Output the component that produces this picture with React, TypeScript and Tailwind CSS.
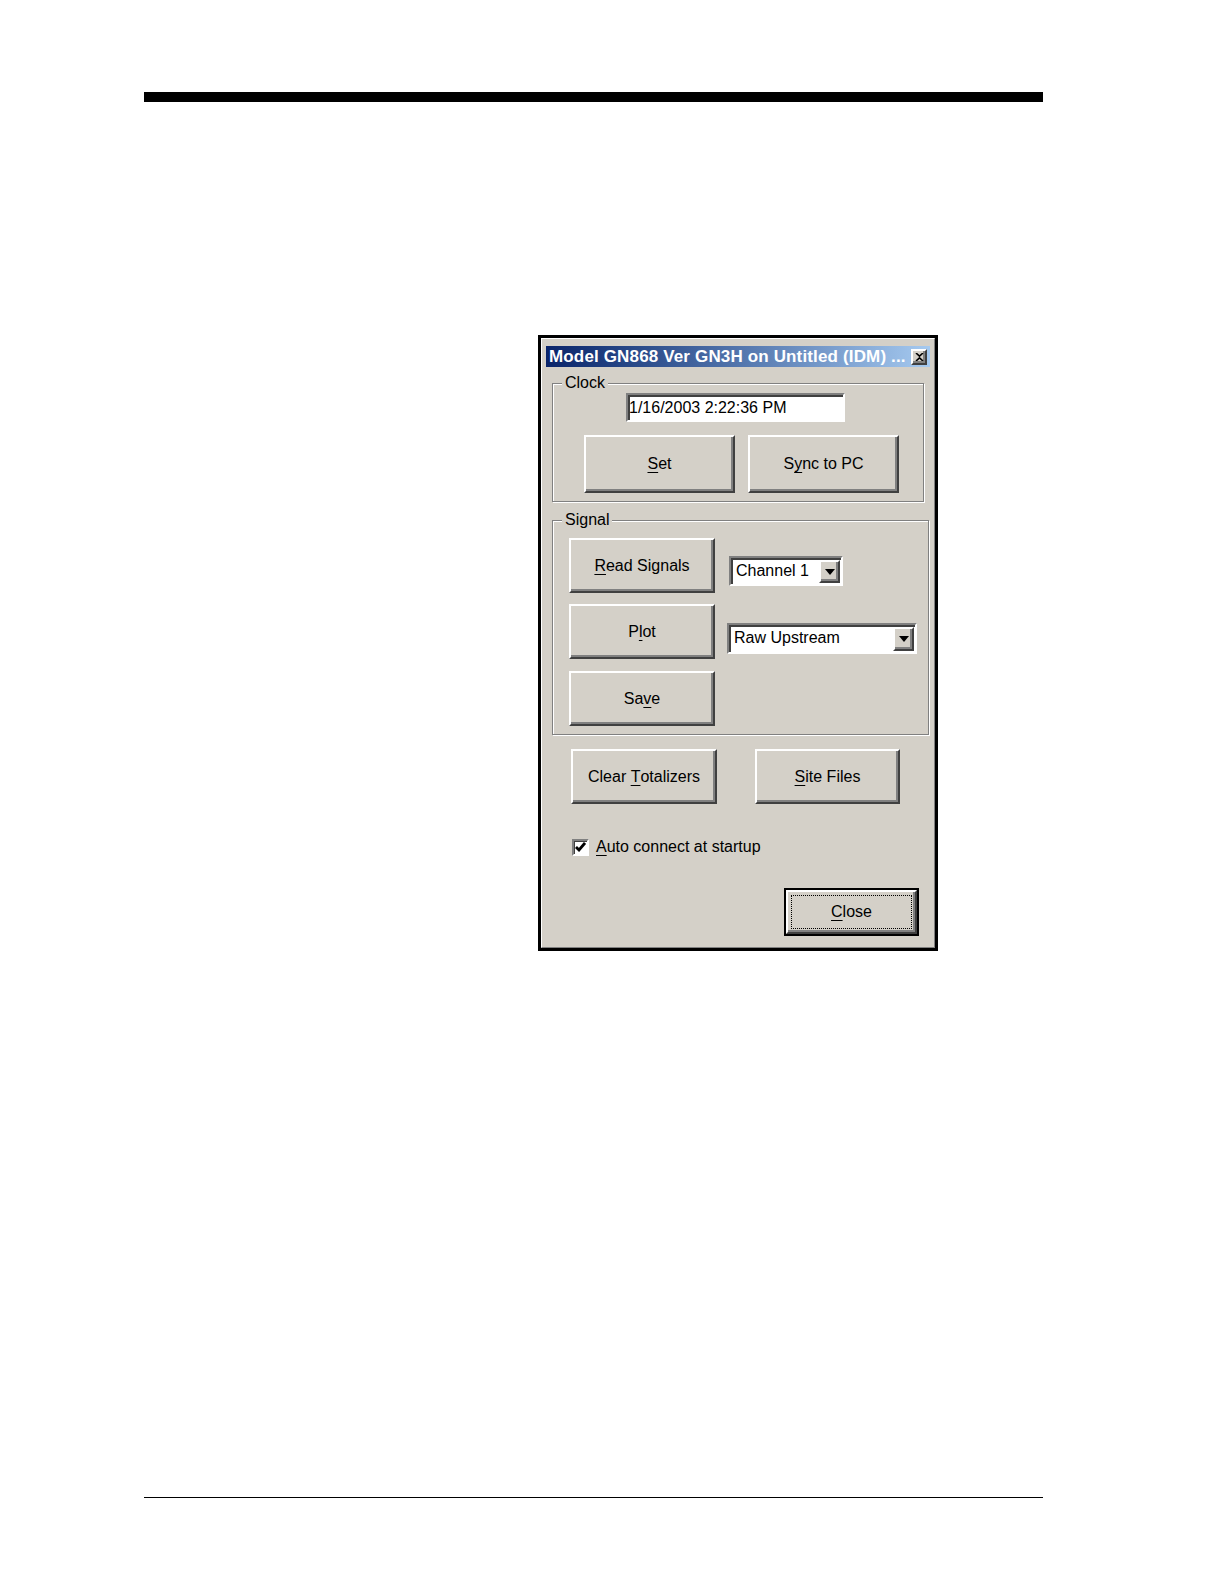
import React from "react";

const face = "bg-[#d4d0c8]";

function Raised({ className = "", children }: { className?: string; children?: React.ReactNode }) {
  return (
    <div
      className={`flex items-center justify-center ${face} border-2 border-t-white border-l-white border-r-[#404040] border-b-[#404040] shadow-[inset_-2px_-2px_0_#808080] ${className}`}
    >
      {children}
    </div>
  );
}

function U({ children }: { children: React.ReactNode }) {
  return <span className="underline underline-offset-[3px] decoration-1">{children}</span>;
}

function Group({ label, className = "", children }: { label: string; className?: string; children: React.ReactNode }) {
  return (
    <div className={`relative border border-[#808080] shadow-[inset_1px_1px_0_#fff,1px_1px_0_#fff] ${className}`}>
      <span className={`absolute -top-[10px] left-[9px] px-[3px] leading-[18px] ${face}`}>{label}</span>
      {children}
    </div>
  );
}

function DownArrow() {
  return (
    <svg width="10" height="6" viewBox="0 0 10 6">
      <path d="M0 0h10L5 6z" fill="#000" />
    </svg>
  );
}

function Select({ value, className = "" }: { value: string; className?: string }) {
  return (
    <div
      className={`flex items-stretch bg-white border-2 border-t-[#808080] border-l-[#808080] border-r-white border-b-white shadow-[inset_2px_2px_0_#404040] ${className}`}
    >
      <span className="flex-1 pl-[5px] pt-[3px] leading-[20px]">{value}</span>
      <Raised className="w-[21px] mt-[2px] mb-[1px] mr-[1px]">
        <DownArrow />
      </Raised>
    </div>
  );
}

export default function App() {
  return (
    <div className="h-[1584px] overflow-hidden bg-white pt-[92px] font-['Liberation_Sans',Arial,sans-serif] text-[16px] text-black">
      <div className="ml-[144px] w-[899px]">
        <div className="h-[10px] bg-black" />

        {/* Dialog window */}
        <div className="ml-[394px] mt-[233px] w-[400px] border-[3px] border-black">
          <div className={`${face} border border-t-white border-l-white border-r-[#808080] border-b-[#808080] px-[4px] pt-[7px] pb-[11px]`}>
            {/* Title bar */}
            <div className="flex h-[21px] items-center justify-between bg-linear-to-r from-[#0a246a] to-[#a6caf0] pl-[3px] pr-[3px]">
              <span className="whitespace-nowrap text-[17px] font-bold leading-[21px] tracking-[0.15px] text-white">
                Model GN868 Ver GN3H on Untitled (IDM) ...
              </span>
              <Raised className="h-[16px] w-[16px] shrink-0 border">
                <svg width="9" height="8" viewBox="0 0 9 8">
                  <path d="M1 0l3.5 3.2L8 0M1 8l3.5-3.2L8 8" stroke="#000" strokeWidth="1.6" fill="none" />
                </svg>
              </Raised>
            </div>

            {/* Clock */}
            <Group label="Clock" className="ml-[6px] mt-[16px] w-[372px] pb-[8px]">
              <div className="ml-[73px] mt-[9px] flex h-[29px] w-[219px] items-center bg-white border-2 border-t-[#808080] border-l-[#808080] border-r-white border-b-white shadow-[inset_2px_2px_0_#404040] pl-[1px]">
                1/16/2003 2:22:36 PM
              </div>
              <div className="ml-[31px] mt-[13px] flex gap-[13px]">
                <Raised className="h-[58px] w-[151px]">
                  <U>S</U>et
                </Raised>
                <Raised className="h-[58px] w-[151px]">
                  S<U>y</U>nc to PC
                </Raised>
              </div>
            </Group>

            {/* Signal */}
            <Group label="Signal" className="ml-[6px] mt-[18px] w-[377px] pb-[8px]">
              <div className="ml-[16px] mt-[17px] flex items-start">
                <Raised className="h-[55px] w-[146px]">
                  <U>R</U>ead Signals
                </Raised>
                <Select value="Channel 1" className="ml-[14px] mt-[18px] h-[30px] w-[114px]" />
              </div>
              <div className="ml-[16px] mt-[11px] flex items-start">
                <Raised className="h-[55px] w-[146px]">
                  P<U>l</U>ot
                </Raised>
                <Select value="Raw Upstream" className="ml-[12px] mt-[19px] h-[31px] w-[190px]" />
              </div>
              <div className="ml-[16px] mt-[12px]">
                <Raised className="h-[55px] w-[146px]">
                  Sa<U>v</U>e
                </Raised>
              </div>
            </Group>

            {/* Bottom buttons */}
            <div className="ml-[25px] mt-[14px] flex gap-[38px]">
              <Raised className="h-[55px] w-[146px]">
                Clear&nbsp;<U>T</U>otalizers
              </Raised>
              <Raised className="h-[55px] w-[145px]">
                <U>S</U>ite Files
              </Raised>
            </div>

            <div className="ml-[26px] mt-[34px] flex items-center gap-[7px]">
              <div className="flex h-[17px] w-[17px] items-center justify-center bg-white border-2 border-t-[#808080] border-l-[#808080] border-r-white border-b-white shadow-[inset_1px_1px_0_#404040]">
                <svg width="11" height="10" viewBox="0 0 11 10">
                  <path d="M1 5l3 3 6-7" stroke="#000" strokeWidth="2.8" fill="none" />
                </svg>
              </div>
              <span className="leading-[18px]">
                <U>A</U>uto connect at startup
              </span>
            </div>

            <div className="mt-[32px] flex justify-end pr-[11px]">
              <div className="border-2 border-black">
                <Raised className="h-[44px] w-[131px]">
                  <div className="flex h-[34px] w-[121px] items-center justify-center border border-dotted border-black">
                    <U>C</U>lose
                  </div>
                </Raised>
              </div>
            </div>
          </div>
        </div>

        <div className="mt-[546px] h-px bg-black" />
      </div>
    </div>
  );
}
